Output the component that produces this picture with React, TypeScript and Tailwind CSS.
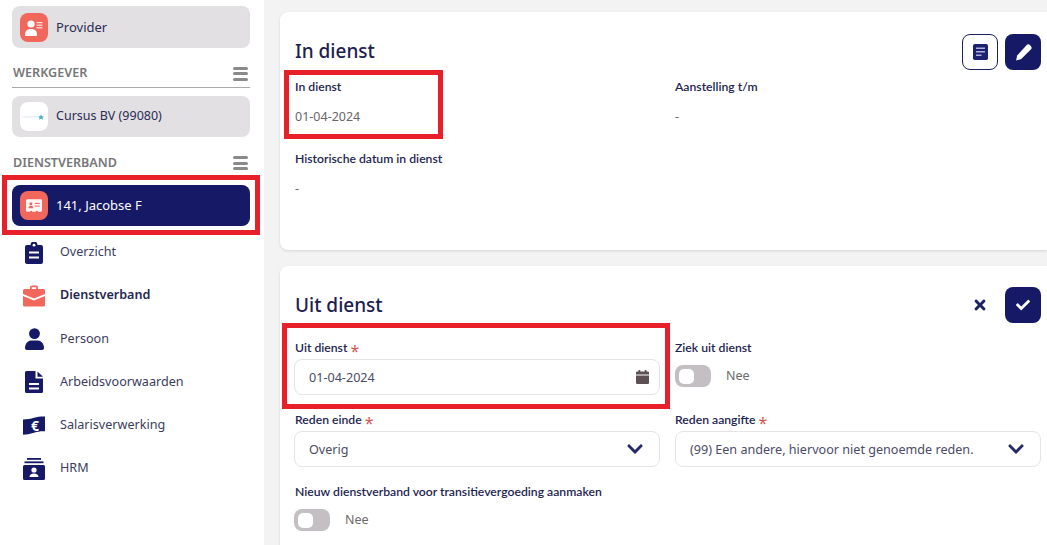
import React from 'react';
import { FaCheck, FaChevronDown, FaTimes } from 'react-icons/fa';

const navy = '#161a66';

const Bars = () => (
  <div className="flex flex-col gap-[2.5px] w-[15px]">
    <span className="h-[3px] rounded-sm bg-[#8a8a8a]" />
    <span className="h-[3px] rounded-sm bg-[#8a8a8a]" />
    <span className="h-[3px] rounded-sm bg-[#8a8a8a]" />
  </div>
);

const Tile = ({ children, white }: { children: React.ReactNode; white?: boolean }) => (
  <div
    className={`w-[28px] h-[29px] rounded-lg flex items-center justify-center shrink-0 ${
      white ? 'bg-white' : 'bg-[#f2675c]'
    }`}
  >
    {children}
  </div>
);

const ProviderIcon = () => (
  <svg width="20" height="16" viewBox="0 0 20 16" fill="#fff">
    <circle cx="7" cy="4" r="3.6" />
    <path d="M1 15c0-4 2-6 6-6s6 2 6 6c0 .6-.4 1-1 1H2c-.6 0-1-.4-1-1z" />
    <rect x="12.5" y="2" width="6" height="1.2" opacity=".8" />
    <rect x="12.5" y="4.6" width="6" height="1.2" opacity=".8" />
    <rect x="12.5" y="7.2" width="6" height="1.2" opacity=".8" />
  </svg>
);

const LogoIcon = () => (
  <svg width="22" height="6" viewBox="0 0 22 6">
    <rect x="0" y="2.6" width="15" height="0.7" fill="#c8dbe6" />
    <path d="M18 0.5l1 1.8 1.9.3-1.4 1.3.4 1.9-1.9-1-1.9 1 .4-1.9-1.4-1.3 1.9-.3z" fill="#4fb3c4" />
  </svg>
);

const CardIcon = () => (
  <svg width="16" height="14" viewBox="0 0 18 15">
    <path
      d="M1.5 0h15A1.5 1.5 0 0 1 18 1.5v11a1.5 1.5 0 0 1-1.5 1.5h-3a1.2 1.2 0 0 0-2.4 0H7a1.2 1.2 0 0 0-2.4 0h-3A1.5 1.5 0 0 1 0 12.5v-11A1.5 1.5 0 0 1 1.5 0z"
      fill="#fff"
      opacity=".95"
    />
    <circle cx="5.5" cy="5" r="1.7" fill="#f2675c" />
    <path d="M2.8 10c0-2 1-2.8 2.7-2.8S8.2 8 8.2 10z" fill="#f2675c" />
    <rect x="10" y="4" width="5.5" height="1.2" fill="#f2675c" />
    <rect x="10" y="7" width="5.5" height="1.2" fill="#f2675c" />
  </svg>
);

const ClipboardIcon = () => (
  <svg width="18" height="22" viewBox="0 0 18 22" fill={navy}>
    <path d="M2 3h3.5a3.5 3.5 0 0 1 7 0H16a2 2 0 0 1 2 2v15a2 2 0 0 1-2 2H2a2 2 0 0 1-2-2V5a2 2 0 0 1 2-2z" />
    <circle cx="9" cy="3.2" r="1.4" fill="#fff" />
    <rect x="4" y="9.5" width="10" height="2" fill="#fff" />
    <rect x="4" y="14.5" width="10" height="2" fill="#fff" />
  </svg>
);

const BriefcaseIcon = () => (
  <svg width="22" height="22" viewBox="0 0 22 22" fill="#f2675c">
    <path d="M7 4V2.5A2 2 0 0 1 9 .5h4a2 2 0 0 1 2 2V4h-1.8V2.3H8.8V4z" />
    <path d="M1.5 4h19A1.5 1.5 0 0 1 22 5.5V9l-11 4.6L0 9V5.5A1.5 1.5 0 0 1 1.5 4z" />
    <path d="M0 11l11 4.6L22 11v9a1.5 1.5 0 0 1-1.5 1.5h-19A1.5 1.5 0 0 1 0 20z" />
  </svg>
);

const PersonIcon = () => (
  <svg width="19" height="22" viewBox="0 0 19 22" fill={navy}>
    <circle cx="9.5" cy="5.6" r="5.4" />
    <path d="M0 20c0-4.6 3.4-7.5 6-7.5h7c2.6 0 6 2.9 6 7.5 0 1.2-.8 2-2 2H2c-1.2 0-2-.8-2-2z" />
  </svg>
);

const FileIcon = () => (
  <svg width="18" height="22" viewBox="0 0 18 22" fill={navy}>
    <path d="M1.5 0H10.5V7.5H18V20.5A1.5 1.5 0 0 1 16.5 22H1.5A1.5 1.5 0 0 1 0 20.5V1.5A1.5 1.5 0 0 1 1.5 0z" />
    <path d="M12.5 0.5L18 5.8H12.5z" />
    <rect x="4" y="12" width="10" height="2" fill="#fff" />
    <rect x="4" y="16.5" width="10" height="2" fill="#fff" />
  </svg>
);

const EuroIcon = () => (
  <svg width="22" height="19" viewBox="0 0 22 19" fill={navy}>
    <path d="M0 3.5C4 3.5 8 2.8 11 1.8 15 .6 19 .2 22 .5v14.8c-4-.3-7 .3-11 1.4-4 1.2-8 1.9-11 2z" />
    <text x="12" y="14.5" textAnchor="middle" fontSize="14" fontWeight="700" fontFamily="Noto Sans, sans-serif" fill="#fff">
      €
    </text>
  </svg>
);

const HrmIcon = () => (
  <svg width="22" height="22" viewBox="0 0 22 22" fill={navy}>
    <rect x="4" y="0" width="14" height="1.8" />
    <rect x="1.5" y="3.4" width="19" height="1.8" />
    <path d="M1.5 7h19A1.5 1.5 0 0 1 22 8.5v12a1.5 1.5 0 0 1-1.5 1.5h-19A1.5 1.5 0 0 1 0 20.5v-12A1.5 1.5 0 0 1 1.5 7z" />
    <circle cx="11" cy="12" r="2.6" fill="#fff" />
    <path d="M6.5 19c0-2.4 1.8-3.6 4.5-3.6s4.5 1.2 4.5 3.6z" fill="#fff" />
  </svg>
);

const NoteIcon = () => (
  <svg width="15" height="16" viewBox="0 0 15 16">
    <rect width="15" height="16" rx="1.8" fill="#1d2270" />
    <rect x="3" y="3.5" width="9" height="1.5" fill="#aeb1dc" />
    <rect x="3" y="7" width="9" height="1.5" fill="#aeb1dc" />
    <rect x="3" y="10.5" width="5.5" height="1.5" fill="#aeb1dc" />
  </svg>
);

const PenIcon = () => (
  <svg width="17" height="17" viewBox="0 0 17 17" fill="#fff">
    <path d="M11.5 1.2a2.6 2.6 0 0 1 3.6 0l.7.7a2.6 2.6 0 0 1 0 3.6L6 15.3 1 16.5l1.2-5z" />
  </svg>
);

const CalendarIcon = () => (
  <svg width="13" height="14" viewBox="0 0 13 14" fill="#5b5053">
    <rect x="2.5" y="0" width="1.8" height="3" rx=".6" />
    <rect x="8.7" y="0" width="1.8" height="3" rx=".6" />
    <path d="M1.2 1.6h10.6A1.2 1.2 0 0 1 13 2.8V4.6H0V2.8a1.2 1.2 0 0 1 1.2-1.2z" />
    <path d="M0 5.4h13v7.4a1.2 1.2 0 0 1-1.2 1.2H1.2A1.2 1.2 0 0 1 0 12.8z" />
  </svg>
);

const SideButton = ({
  icon,
  label,
  white,
  active,
  className,
  textClass,
}: {
  icon: React.ReactNode;
  label: string;
  white?: boolean;
  active?: boolean;
  className?: string;
  textClass?: string;
}) => (
  <div
    className={`flex items-center gap-2 pl-2 rounded-lg w-[238px] ${
      active ? 'bg-[#161a66] text-white' : 'bg-[#e2e0e3] text-[#2c2c54]'
    } ${className ?? ''}`}
  >
    <Tile white={white}>{icon}</Tile>
    <span className={textClass ?? 'text-[13px]'}>{label}</span>
  </div>
);

const NavItem = ({ icon, label, bold }: { icon: React.ReactNode; label: string; bold?: boolean }) => (
  <div className="flex items-center h-[43.2px]">
    <div className="w-[22px] ml-[11px] flex justify-center shrink-0">{icon}</div>
    <span className={`ml-[15px] text-[12.6px] ${bold ? 'font-semibold text-[#24264f]' : 'text-[#3b3c5c]'}`}>{label}</span>
  </div>
);

const Label = ({ children, required }: { children: React.ReactNode; required?: boolean }) => (
  <div className="h-[16px] text-[12.2px] leading-[16px] font-semibold text-[#23254f] font-['Lato',sans-serif] whitespace-nowrap">
    {children}
    {required && (
      <span className="ml-[3px] font-['Noto_Sans',sans-serif] font-normal text-[#d8574f] text-[16px] leading-none align-[-5px]">*</span>
    )}
  </div>
);

const ReadField = ({ label, value, className }: { label: string; value: string; className?: string }) => (
  <div className={className}>
    <Label>{label}</Label>
    <div className="mt-[13px] text-[12.5px] leading-[17px] text-[#6a6668]">{value}</div>
  </div>
);

const InputBox = ({ value, children, className }: { value: string; children: React.ReactNode; className?: string }) => (
  <div
    className={`mt-[3px] h-[36px] rounded-lg border border-[#e6e4e7] flex items-center justify-between pl-[14px] pr-[10px] text-[12.6px] text-[#4b4b66] bg-white ${
      className ?? ''
    }`}
  >
    <span className="pt-[2px]">{value}</span>
    {children}
  </div>
);

const Toggle = ({ className }: { className?: string }) => (
  <div className={`flex items-center gap-[15px] ${className ?? ''}`}>
    <div className="w-[36px] h-[22px] rounded-lg bg-[#c3bfc3] flex items-center pl-[4px]">
      <div className="w-[15px] h-[15px] rounded-[5px] bg-white" />
    </div>
    <span className="text-[12.5px] text-[#6d6a6c]">Nee</span>
  </div>
);

const Chevron = () => <FaChevronDown className="text-[#25286a] text-[18px] mr-[5px]" />;

export default function App() {
  return (
    <div className="relative w-[1047px] h-[545px] overflow-hidden flex bg-[#f3f3f3] font-['Noto_Sans',sans-serif]">
      {/* sidebar */}
      <aside className="w-[264px] h-full bg-white pl-[12px] pt-[6px] shrink-0">
        <SideButton icon={<ProviderIcon />} label="Provider" className="h-[42px] pt-px" />
        <div className="w-[238px] h-[40px] flex items-center justify-between border-b border-[#aaa8aa] pt-[13px] pb-[1px] pl-px pr-[2px]">
          <span className="text-[12.6px] font-semibold text-[#777678]">WERKGEVER</span>
          <Bars />
        </div>
        <SideButton icon={<LogoIcon />} label="Cursus BV (99080)" white className="h-[41px] mt-[8px]" textClass="text-[12.5px]" />
        <div className="w-[238px] h-[48px] flex items-center justify-between pt-[4px] pl-px pr-[2px]">
          <span className="text-[12.6px] font-semibold text-[#777678]">DIENSTVERBAND</span>
          <Bars />
        </div>
        <SideButton icon={<CardIcon />} label="141, Jacobse F" active className="h-[41px]" />
        <div className="mt-[5px]">
          <NavItem icon={<ClipboardIcon />} label="Overzicht" />
          <NavItem icon={<BriefcaseIcon />} label="Dienstverband" bold />
          <NavItem icon={<PersonIcon />} label="Persoon" />
          <NavItem icon={<FileIcon />} label="Arbeidsvoorwaarden" />
          <NavItem icon={<EuroIcon />} label="Salarisverwerking" />
          <NavItem icon={<HrmIcon />} label="HRM" />
        </div>
      </aside>

      {/* main */}
      <main className="flex-1 pl-[16px] pt-[12px] min-w-0">
        <section className="h-[238px] bg-white rounded-l-lg rounded-r-none shadow-[0_1px_3px_rgba(0,0,0,0.12)] pl-[15px] pr-[6px] pt-[22px]">
          <div className="flex items-center justify-between h-[36px]">
            <h1 className="text-[19px] font-medium text-[#1d2050] mt-[-1px]">In dienst</h1>
            <div className="flex gap-[7px]">
              <div className="w-[36px] h-[36px] rounded-lg border border-[#1d2160] flex items-center justify-center bg-white">
                <NoteIcon />
              </div>
              <div className="w-[36px] h-[36px] rounded-lg bg-[#161a66] flex items-center justify-center">
                <PenIcon />
              </div>
            </div>
          </div>
          <div className="grid grid-cols-[380px_366px]">
            <ReadField label="In dienst" value="01-04-2024" className="mt-[9px]" />
            <ReadField label="Aanstelling t/m" value="-" className="mt-[9px]" />
            <ReadField label="Historische datum in dienst" value="-" className="mt-[26px]" />
          </div>
        </section>

        <section className="mt-[16px] h-[300px] bg-white rounded-l-lg shadow-[0_1px_3px_rgba(0,0,0,0.12)] pl-[15px] pr-[6px] pt-[21px]">
          <div className="flex items-center justify-between h-[36px]">
            <h1 className="text-[19px] font-medium text-[#1d2050]">Uit dienst</h1>
            <div className="flex items-center gap-[7px]">
              <div className="w-[36px] h-[36px] flex items-center justify-center">
                <FaTimes className="text-[#1d2160] text-[16px]" />
              </div>
              <div className="w-[36px] h-[36px] rounded-lg bg-[#161a66] flex items-center justify-center">
                <FaCheck className="text-white text-[14px]" />
              </div>
            </div>
          </div>
          <div className="grid grid-cols-[380px_366px] mt-[17px]">
            <div className="pr-[15px]">
              <Label required>Uit dienst</Label>
              <InputBox value="01-04-2024" className="-ml-px">
                <CalendarIcon />
              </InputBox>
            </div>
            <div>
              <Label>Ziek uit dienst</Label>
              <Toggle className="mt-[9px]" />
            </div>
            <div className="pr-[15px] mt-[17px]">
              <Label required>Reden einde</Label>
              <InputBox value="Overig" className="-ml-px">
                <Chevron />
              </InputBox>
            </div>
            <div className="mt-[17px]">
              <Label required>Reden aangifte</Label>
              <InputBox value="(99) Een andere, hiervoor niet genoemde reden.">
                <Chevron />
              </InputBox>
            </div>
          </div>
          <div className="mt-[17px]">
            <Label>Nieuw dienstverband voor transitievergoeding aanmaken</Label>
            <Toggle className="mt-[9px] -ml-px" />
          </div>
        </section>
      </main>

      {/* red annotation boxes */}
      <div className="absolute left-[2px] top-[175px] w-[258px] h-[60px] border-[5px] border-[#e8202a]" />
      <div className="absolute left-[284px] top-[70px] w-[159px] h-[69px] border-[5px] border-[#e8202a]" />
      <div className="absolute left-[282px] top-[323px] w-[388px] h-[86px] border-[5px] border-[#e8202a]" />
    </div>
  );
}
